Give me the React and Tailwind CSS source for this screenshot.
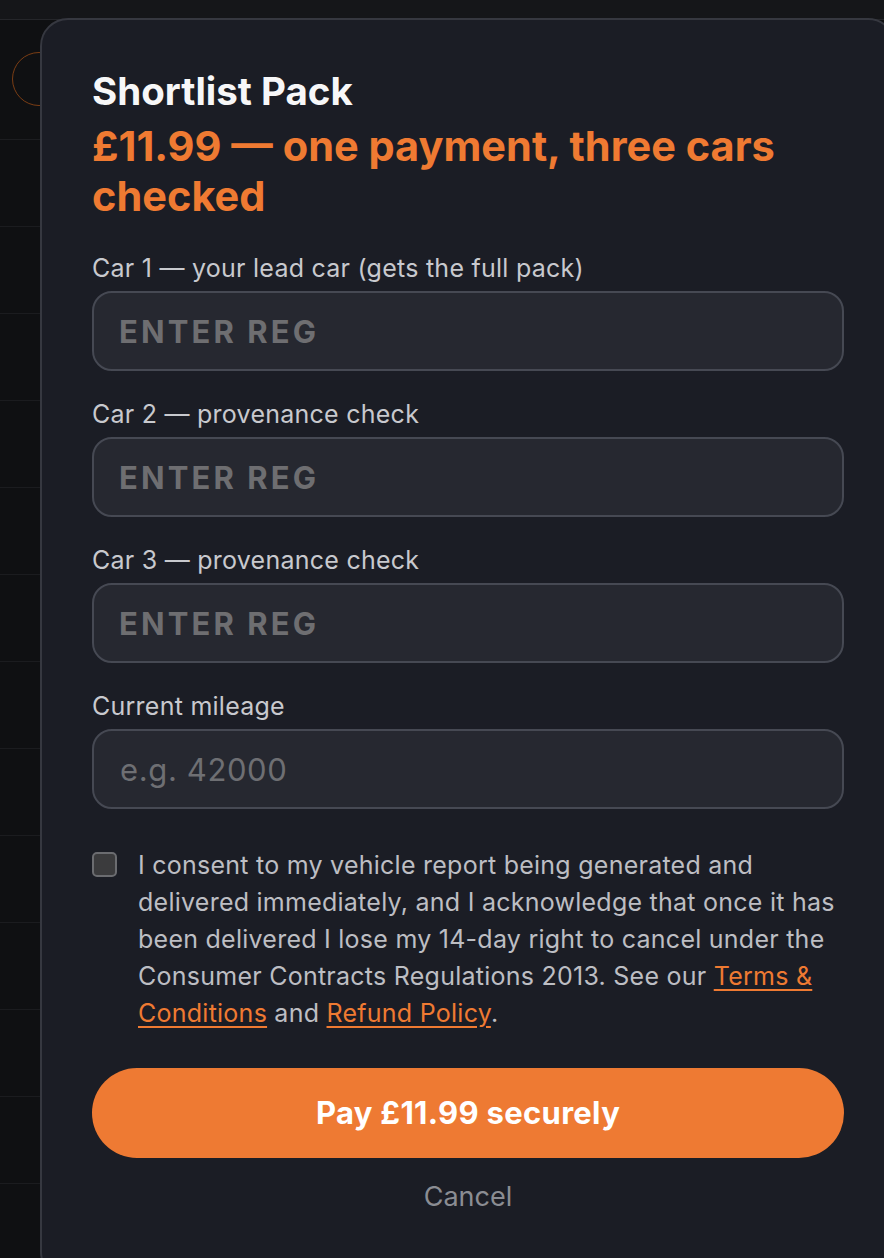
import React from 'react';

const font = { fontFamily: 'Inter, "Noto Sans", sans-serif' };

const RegField = ({ label }) => (
  <div className="flex flex-col">
    <label className="text-[25px] leading-[32px] tracking-[0.01em] text-[#c8c9ce]">{label}</label>
    <input
      type="text"
      placeholder="ENTER REG"
      className="mt-[7px] h-[80px] w-full rounded-[20px] border-2 border-[#464953] bg-[#262830] px-[25px] text-[31px] font-bold uppercase tracking-[0.1em] text-white outline-none placeholder:text-[#6e6e71]"
    />
  </div>
);

export default function App() {
  const rows = Array.from({ length: 13 });

  return (
    <div className="relative h-[1258px] w-full overflow-hidden bg-[#0f1012]" style={font}>
      {/* page behind the dialog, dimmed */}
      <div className="h-[20px] border-b border-[#25262a] bg-[#151619]" />
      <div className="flex h-[120px] items-start border-b border-[#1c1d20] pl-[12px] pt-[32px]">
        <div className="h-[54px] w-[54px] rounded-full border border-[#7a3d14]" />
      </div>
      {rows.map((_, i) => (
        <div key={i} className="h-[87px] border-b border-[#1b1c1f]" />
      ))}

      {/* dialog */}
      <div className="absolute left-[40px] top-[18px] h-[1262px] w-[856px] rounded-[28px] border-2 border-[#363840] bg-[#1b1d25] px-[50px] pt-[47px]">
        <h2 className="text-[38.5px] font-bold leading-[48px] text-[#f7f7f8]">Shortlist Pack</h2>
        <p className="mt-[6px] text-[41.5px] font-bold leading-[50px] text-[#ef7a32]">
          £11.99 — one payment, three cars checked
        </p>

        <div className="mt-[31px] flex flex-col gap-[27px]">
          <RegField label="Car 1 — your lead car (gets the full pack)" />
          <RegField label="Car 2 — provenance check" />
          <RegField label="Car 3 — provenance check" />
          <div className="flex flex-col">
            <label className="text-[25px] leading-[32px] tracking-[0.01em] text-[#c8c9ce]">Current mileage</label>
            <input
              type="text"
              inputMode="numeric"
              placeholder="e.g. 42000"
              className="mt-[7px] h-[80px] w-full rounded-[20px] border-2 border-[#464953] bg-[#262830] px-[26px] text-[31px] tracking-[0.02em] text-white outline-none placeholder:text-[#6e6f73]"
            />
          </div>
        </div>

        <div className="mt-[38px] flex items-start gap-[21px]">
          <div className="mt-[5px] h-[25px] w-[25px] shrink-0 rounded-[5px] border-2 border-[#6b6c70] bg-[#3b3b3d]" />
          <p className="text-[25px] leading-[37px] tracking-[0.01em] text-[#bdbec3]">
            I consent to my vehicle report being generated and delivered immediately, and I acknowledge that once it has
            been delivered I lose my 14-day right to cancel under the Consumer Contracts Regulations 2013. See our{' '}
            <a href="#" className="text-[#ef7a32] underline underline-offset-[4px]">Terms &amp; Conditions</a> and{' '}
            <a href="#" className="text-[#ef7a32] underline underline-offset-[4px]">Refund Policy</a>.
          </p>
        </div>

        <button className="mt-[36px] h-[90px] w-full rounded-full bg-[#ee7a33] text-[31px] font-bold tracking-[0.01em] text-white">
          Pay £11.99 securely
        </button>
        <div className="mt-[21px] text-center text-[27px] leading-[36px] text-[#8b8d93]">Cancel</div>
      </div>
    </div>
  );
}
